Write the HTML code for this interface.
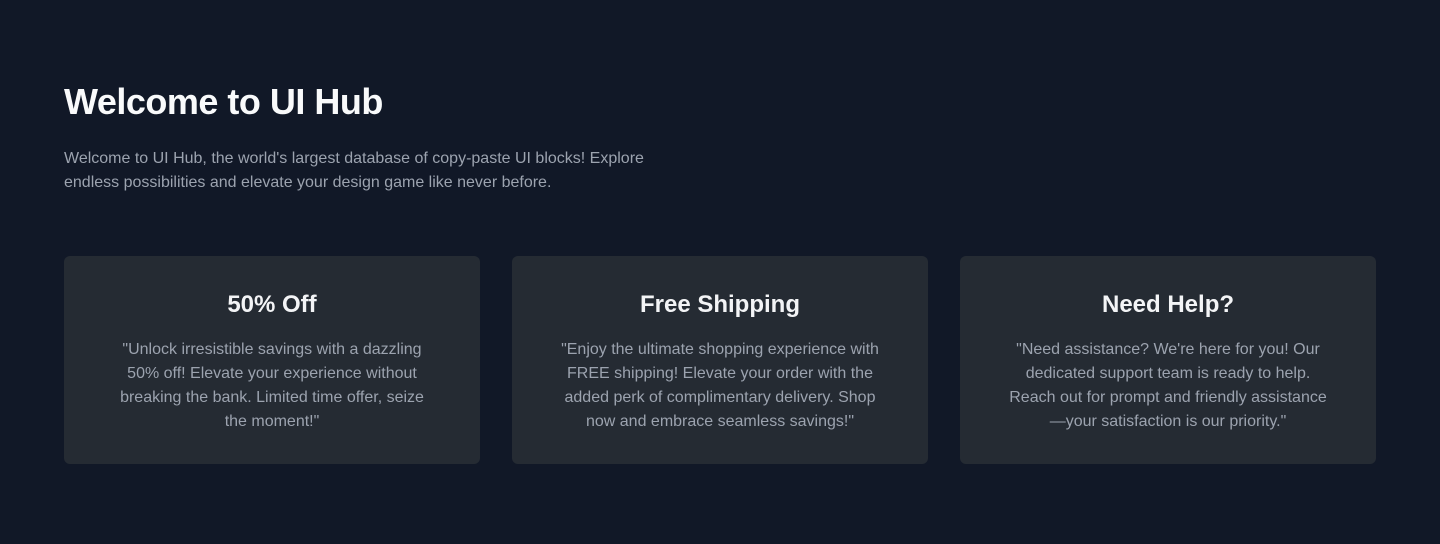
<!DOCTYPE html>
<html><head><style>
body{margin:0;background:#111827;font-family:"Liberation Sans",sans-serif;width:1440px;height:544px;overflow:hidden}
.wrap{padding:80px 64px 0}
h1{margin:0;font-size:36px;line-height:44px;color:#f9fafb;font-weight:700;letter-spacing:-0.5px}
p.lead{margin:23px 0 0;font-size:16px;line-height:24px;color:#9ca3af}
.cards{display:flex;gap:32px;margin-top:61px}
.card{width:416px;height:208px;box-sizing:border-box;background:#252b33;border-radius:6px;padding:33px 20px 0;text-align:center}
.card h2{margin:0;font-size:24px;line-height:32px;color:#f3f4f6;font-weight:600}
.card p{margin:17px 0 0;font-size:16px;line-height:24px;color:#9ca3af;white-space:nowrap}
</style></head><body><div class="wrap">
<h1>Welcome to UI Hub</h1>
<p class="lead">Welcome to UI Hub, the world's largest database of copy-paste UI blocks! Explore<br>endless possibilities and elevate your design game like never before.</p>
<div class="cards">
<div class="card"><h2>50% Off</h2><p>"Unlock irresistible savings with a dazzling<br>50% off! Elevate your experience without<br>breaking the bank. Limited time offer, seize<br>the moment!"</p></div>
<div class="card"><h2>Free Shipping</h2><p>"Enjoy the ultimate shopping experience with<br>FREE shipping! Elevate your order with the<br>added perk of complimentary delivery. Shop<br>now and embrace seamless savings!"</p></div>
<div class="card"><h2>Need Help?</h2><p>"Need assistance? We're here for you! Our<br>dedicated support team is ready to help.<br>Reach out for prompt and friendly assistance<br>—your satisfaction is our priority."</p></div>
</div></div></body></html>
